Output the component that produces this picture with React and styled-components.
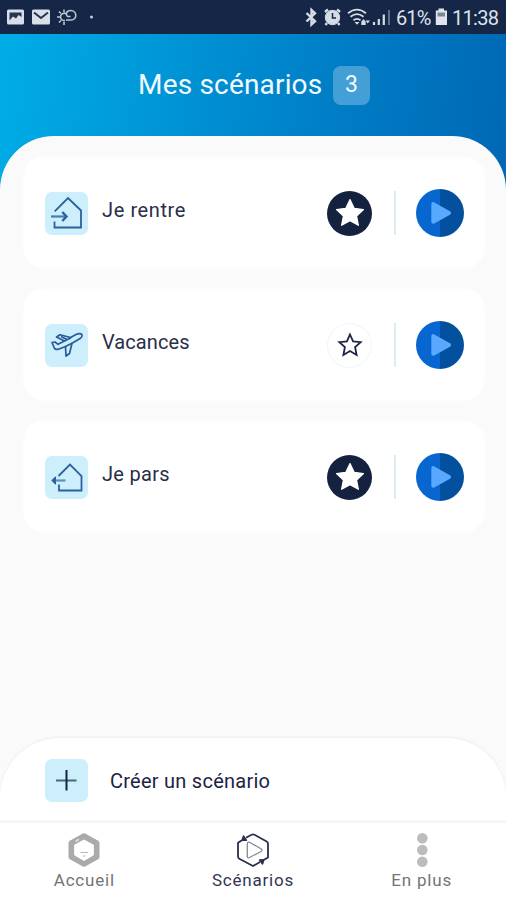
import React from 'react';
import styled, { createGlobalStyle, css } from 'styled-components';

const Global = createGlobalStyle`
  * { box-sizing: border-box; }
  body { margin: 0; font-family: Roboto, "Noto Sans", sans-serif; color: #1a2142; }
  svg { display: block; flex: none; }
`;

const Screen = styled.div`
  width: 506px;
  height: 900px;
  display: flex;
  flex-direction: column;
  overflow: hidden;
  background: #fff;
`;

const StatusBar = styled.header`
  height: 34px;
  flex: none;
  display: flex;
  align-items: center;
  justify-content: space-between;
  background: #152647;
  color: #dde2e9;
`;

const StatusText = styled.span`
  font-family: Roboto, sans-serif;
  font-size: 20px;
  line-height: 34px;
  height: 34px;
  padding-top: 1px;
  white-space: nowrap;
  letter-spacing: ${(p) => p.$spacing}px;
  width: ${(p) => p.$width}px;
  margin-left: ${(p) => p.$gap}px;
`;

const BatterySlot = styled.span`
  margin-left: 4px;
`;

const StatusRight = styled.div`
  display: flex;
  align-items: center;
  width: 202px;
`;

const Main = styled.main`
  flex: 1;
  display: flex;
  flex-direction: column;
  background: linear-gradient(97deg, #00ade6 0%, #0098d8 25%, #007fc7 55%, #0062b0 95%);
`;

const Heading = styled.div`
  height: 102px;
  flex: none;
  display: flex;
  align-items: center;
  padding-left: 138px;
`;

const Title = styled.h1`
  margin: 0;
  width: 195px;
  font-size: 28px;
  font-weight: 400;
  line-height: 34px;
  letter-spacing: 0.18px;
  white-space: nowrap;
  color: #f2fbff;
`;

const Count = styled.span`
  width: 37px;
  height: 39px;
  border-radius: 8px;
  background: #439fd6;
  color: #f2fbff;
  font-size: 23px;
  line-height: 38px;
  text-align: center;
`;

const Sheet = styled.section`
  flex: 1;
  display: flex;
  flex-direction: column;
  justify-content: space-between;
  border-radius: 54px 54px 0 0;
  background: #fafafa;
`;

const List = styled.ul`
  list-style: none;
  margin: 0;
  padding: 21px 22px 0 24px;
  display: flex;
  flex-direction: column;
  gap: 21px;
`;

const Card = styled.li`
  height: 111px;
  display: flex;
  align-items: center;
  padding: 1px 20px 0 21px;
  border-radius: 20px;
  background: #fff;
  box-shadow: 0 0 4px rgba(255, 255, 255, 0.9);
`;

const Tile = styled.span`
  width: 43px;
  height: 43px;
  flex: none;
  display: grid;
  place-items: center;
  border-radius: 7px;
  background: #cdeefb;
`;

const Label = styled.span`
  flex: 1;
  padding: 0 0 7px 14px;
  font-size: 20px;
  line-height: 24px;
  letter-spacing: ${(p) => p.$spacing}px;
  white-space: nowrap;
  color: #292e4a;
`;

const RoundButton = styled.button`
  width: 45px;
  height: 45px;
  padding: 0;
  flex: none;
  display: grid;
  place-items: center;
  border-radius: 50%;
  ${(p) =>
    p.$active
      ? css`border: 0; background: #14213f;`
      : css`border: 1.5px solid #ebf7fb; background: #fff;`}
`;

const Divider = styled.i`
  width: 2px;
  height: 44px;
  margin: 0 20px 0 22px;
  background: #d9edf3;
`;

const PlayButton = styled.button`
  width: 48px;
  height: 48px;
  padding: 0;
  border: 0;
  flex: none;
  border-radius: 50%;
  background: linear-gradient(90deg, #0766cf 50%, #03509e 50%);
`;

const Create = styled.div`
  height: 82px;
  display: flex;
  align-items: center;
  padding: 3px 45px 0;
  border-radius: 60px 60px 0 0;
  background: #fff;
  box-shadow: 0 -1px 3px rgba(0, 0, 0, 0.05);
`;

const CreateLabel = styled.span`
  margin-left: 22px;
  font-size: 20px;
  line-height: 24px;
  letter-spacing: 0.25px;
  color: #1c2344;
`;

const Nav = styled.nav`
  height: 80px;
  flex: none;
  display: grid;
  grid-template-columns: repeat(3, 1fr);
  border-top: 3px solid #f6f6f6;
  background: #fff;
`;

const NavItem = styled.a`
  display: flex;
  flex-direction: column;
  align-items: center;
  padding-top: 9px;
  font-size: 17px;
  line-height: 22px;
  letter-spacing: 0.8px;
  color: ${(p) => (p.$active ? '#303653' : '#747474')};
  span { margin-top: 1px; }
`;

function HouseIcon({ leaving }) {
  return (
    <svg width="43" height="43" viewBox="0 0 43 43" fill="none" stroke="#2c609f" strokeWidth="1.8">
      {leaving ? (
        <>
          <path d="M13.5 20 25 8.5 36.5 20V34.5H14V28.5" />
          <path d="M20.5 24.5H9" stroke="#5d91be" strokeWidth="2.2" />
          <path d="M10.5 20.8 6.8 24.5l3.7 3.7z" fill="#2c609f" strokeWidth="1" />
        </>
      ) : (
        <>
          <path d="M9.7 19.3 23 6 36 18.5V35.5H9.5V29.5" />
          <path d="M6 24.5H20" stroke="#477dad" strokeWidth="2.2" />
          <path d="M17.3 20 21.5 24.5l-4.2 4.5" strokeWidth="2.4" />
        </>
      )}
    </svg>
  );
}

function PlaneIcon() {
  return (
    <svg width="43" height="43" viewBox="0 0 43 43" fill="none" stroke="#285b9c" strokeWidth="1.7" strokeLinejoin="round">
      <path d="M7 18.5 10 18 13 20.3 19.5 17 11.5 13 15 10.8 25.5 13.5 31 10.5C34 9 36.5 9.3 37 11C37.4 13 35.5 14.5 33 15.8L27 19.3 24.5 29.5 21 32 20.5 22.5 14 25C11.5 26 10 25.2 9.3 24Z" />
      <path d="M19.5 17 26 13.8M20.5 22.5 27 19.3M16 12.5 22 15.5" />
    </svg>
  );
}

function StarIcon({ filled }) {
  return filled ? (
    <svg width="30" height="30" viewBox="0 0 30 30" fill="#fff" stroke="#fff" strokeWidth="1.2" strokeLinejoin="round">
      <path d="M15 1.5 19.2 10.3 28.5 11.5 21.6 18 23.4 27.3 15 22.7 6.6 27.3 8.4 18 1.5 11.5 10.8 10.3Z" />
    </svg>
  ) : (
    <svg width="28" height="28" viewBox="0 0 28 28" fill="none" stroke="#1c2445" strokeWidth="1.8">
      <path d="M14 3.5 17.1 10.3 24.7 11.1 19.1 16.2 20.6 24 14 20.1 7.4 24 8.9 16.2 3.3 11.1 10.9 10.3Z" />
    </svg>
  );
}

function Scenario({ name, icon, favorite, spacing }) {
  return (
    <Card>
      <Tile>{icon}</Tile>
      <Label $spacing={spacing}>{name}</Label>
      <RoundButton $active={favorite}><StarIcon filled={favorite} /></RoundButton>
      <Divider />
      <PlayButton>
        <svg width="48" height="48" viewBox="0 0 48 48" fill="#58a9ff" stroke="#58a9ff" strokeWidth="4" strokeLinejoin="round">
          <path d="M17.3 15.2V32.8L33 24Z" />
        </svg>
      </PlayButton>
    </Card>
  );
}

function NotificationIcons() {
  return (
    <svg width="110" height="34" viewBox="0 0 110 34" fill="none">
      <rect x="7" y="9.5" width="17" height="15" rx="1.5" fill="#d8dfe8" />
      <path d="M9.5 12.5H21.5V17L18.5 15 16 18.5 13 16.5 9.5 20.5Z" fill="#263551" />
      <rect x="32" y="9.5" width="18" height="15" rx="1.5" fill="#d8dfe8" />
      <path d="M34 12.5 41 18 48 12.5" stroke="#263551" strokeWidth="2" />
      <g stroke="#b8c5d7" strokeWidth="1.6">
        <path d="M65 20.5A3.7 3.7 0 1 1 66.5 14M57 17H60M59 11.5 61 13.5M64 9.5V12M59 22.5 61 20.5M64 22V25" />
        <path d="M66 20H71C77.5 20 77.5 10.5 70.5 10.5C66 10.5 65.5 14.5 67.5 16.5H70.5" />
      </g>
      <circle cx="91.5" cy="17" r="1.5" fill="#c3cedb" />
    </svg>
  );
}

function SystemIcons() {
  return (
    <svg width="88" height="34" viewBox="0 0 88 34" fill="none" stroke="#d5dce5">
      <path d="M2.5 13 11 21.2 7.5 24.5V10L11 13.3 2.5 21.5" strokeWidth="2.4" />
      <circle cx="28.5" cy="17.5" r="7.2" fill="#d5dce5" />
      <path d="M21 12 24 9.5M33 9.5 36 12M23 23 21.5 25M34 23 35.5 25" strokeWidth="2.5" />
      <path d="M28.5 13V18H32" stroke="#152647" strokeWidth="1.5" />
      <path d="M44 13.3Q53 6 62 13.3M46.5 16.8Q53 11.5 59.5 16.8M49.5 20.2Q53 17.5 56.5 20.2" strokeWidth="1.8" />
      <path d="M50.5 22 53 24.8 55.5 22Z" fill="#d5dce5" stroke="none" />
      <path d="M57.3 21.7 59.5 19 61.7 21.7V25H57.3ZM61.5 20.5H66L63.7 23.5Z" fill="#d5dce5" stroke="none" />
      <path d="M70 22V25M74.8 19V25M79.8 14.5V25" strokeWidth="2.2" />
      <path d="M85 10V25" stroke="#60708a" strokeWidth="2" />
    </svg>
  );
}

function BatteryIcon() {
  return (
    <svg width="13" height="34" viewBox="0 0 13 34">
      <path d="M3.5 8.5H9V10.5H12V25H.8V10.5H3.5Z" fill="#e0e5eb" />
      <path d="M2.5 12.5H10V16.5H2.5Z" fill="#7c8799" />
    </svg>
  );
}

function HomeNavIcon() {
  return (
    <svg width="36" height="36" viewBox="0 0 36 36" fill="none">
      <path d="M18 3.8 31 11V25L18 32.2 5 25V11Z" fill="#aaa" stroke="#aaa" strokeWidth="5" strokeLinejoin="round" />
      <path d="M18 8 27.3 13V23L18 28.5 8.7 23V13Z" fill="#fff" stroke="#fff" strokeLinejoin="round" />
      <path d="M14.5 20.5H22M17 24H19.5" stroke="#bbb" strokeWidth="1.2" />
      <path d="M9.5 9.5 13 7.2" stroke="#ddd" strokeWidth="1.8" />
    </svg>
  );
}

function ScenarioNavIcon() {
  return (
    <svg width="36" height="36" viewBox="0 0 36 36" fill="none" stroke="#29304e" strokeWidth="1.8" strokeLinejoin="round">
      <path d="M7 8.2 3 10.8V24.5Q3 26 4.3 26.7L18 34 25 30M29 27.8 33 25.4V11.8Q33 10.3 31.7 9.5L19.5 2.7Q18 2 16.5 2.7L11 5.7" />
      <path d="M7 8.2 8.5 4 11.5 8.3ZM29 27.8 27.5 32 24.5 28Z" fill="#29304e" strokeWidth="1.4" />
      <path d="M12.3 12V24.5Q12.5 26.5 14.5 25.5L26 19.5Q28 18 26 16.8L14.5 10.3Q12.5 9.5 12.3 12Z" stroke="#858995" strokeWidth="1.3" />
    </svg>
  );
}

function MoreNavIcon() {
  return (
    <svg width="36" height="36" viewBox="0 0 36 36" fill="#bcbcbc">
      <circle cx="18.3" cy="6.3" r="5.3" />
      <circle cx="18.3" cy="18" r="5.3" />
      <circle cx="18.3" cy="29.7" r="5.3" />
    </svg>
  );
}

export default function App() {
  return (
    <Screen>
      <Global />
      <StatusBar>
        <NotificationIcons />
        <StatusRight>
          <SystemIcons />
          <StatusText $width={35} $gap={4} $spacing={-0.9}>61%</StatusText>
          <BatterySlot><BatteryIcon /></BatterySlot>
          <StatusText $width={50} $gap={4} $spacing={-0.7}>11:38</StatusText>
        </StatusRight>
      </StatusBar>
      <Main>
        <Heading>
          <Title>Mes scénarios</Title>
          <Count>3</Count>
        </Heading>
        <Sheet>
          <List>
            <Scenario name="Je rentre" icon={<HouseIcon />} favorite spacing={0.6} />
            <Scenario name="Vacances" icon={<PlaneIcon />} spacing={0.08} />
            <Scenario name="Je pars" icon={<HouseIcon leaving />} favorite spacing={0.3} />
          </List>
          <Create>
            <Tile>
              <svg width="43" height="43" viewBox="0 0 43 43" stroke="#14213f" strokeWidth="2">
                <path d="M11 21.5H31.5" stroke="#45667d" />
                <path d="M21.5 11V31.5" />
              </svg>
            </Tile>
            <CreateLabel>Créer un scénario</CreateLabel>
          </Create>
        </Sheet>
      </Main>
      <Nav>
        <NavItem><HomeNavIcon /><span>Accueil</span></NavItem>
        <NavItem $active><ScenarioNavIcon /><span>Scénarios</span></NavItem>
        <NavItem><MoreNavIcon /><span>En plus</span></NavItem>
      </Nav>
    </Screen>
  );
}
